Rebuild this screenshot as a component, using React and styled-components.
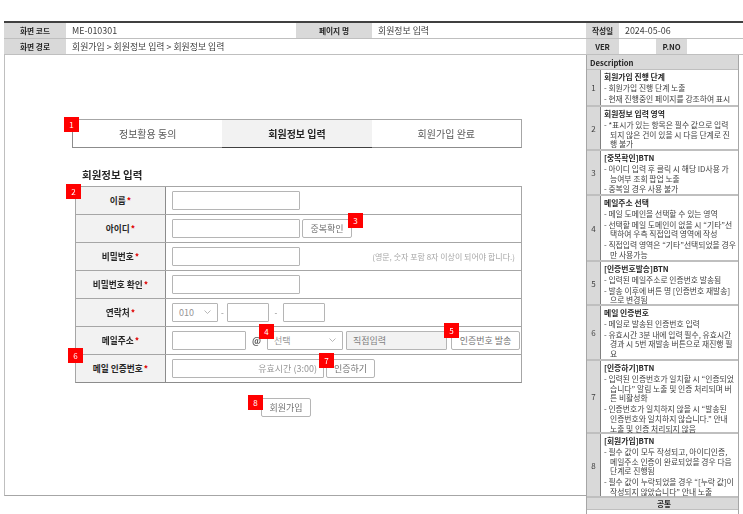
import React from 'react';
import styled, { createGlobalStyle } from 'styled-components';

const GlobalStyle = createGlobalStyle`
  html, body {
    margin: 0;
    padding: 0;
    background: #fff;
  }
  body {
    font-family: "Noto Sans CJK KR", "Noto Sans", sans-serif;
    color: #333;
  }
  * {
    box-sizing: border-box;
  }
`;

const Page = styled.div`
  width: 743px;
  height: 514px;
  padding: 21px 0 0 4px;
  overflow: hidden;
  filter: blur(0.25px);
`;

const Header = styled.div`
  display: grid;
  grid-template-columns: 62px 230px 76px 214px 33px 37px 31px 1fr;
  grid-template-rows: 16px 16px;
  border-top: 2px solid #404040;
`;

const HeadCell = styled.div`
  grid-column: span ${(p) => p.$span || 1};
  display: flex;
  align-items: center;
  justify-content: ${(p) => (p.$gray ? 'center' : 'flex-start')};
  padding-left: ${(p) => (p.$gray ? 0 : '6px')};
  background: ${(p) => (p.$gray ? '#d9d9d9' : '#fff')};
  border-bottom: 1px solid #bfbfbf;
  font-size: ${(p) => (p.$gray ? '7.7px' : '8.9px')};
  font-weight: ${(p) => (p.$gray ? 700 : 400)};
  color: ${(p) => (p.$gray ? '#262626' : '#404040')};
  white-space: nowrap;
`;

const Body = styled.div`
  display: flex;
  align-items: flex-start;
`;

const Main = styled.div`
  width: 582px;
  height: 441px;
  padding: 64px 0 0 67px;
  border-left: 1px solid #bfbfbf;
  border-bottom: 1px solid #a6a6a6;
`;

const Steps = styled.div`
  position: relative;
  display: flex;
  width: 450px;
  height: 29px;
  border: 1px solid #a6a6a6;
  border-left: 1px solid #8c8c8c;
  border-bottom: 1px solid #8c8c8c;
`;

const Step = styled.div`
  flex: 1;
  display: flex;
  align-items: center;
  justify-content: center;
  margin-bottom: ${(p) => (p.$active ? '-1px' : 0)};
  background: ${(p) => (p.$active ? '#f2f2f2' : '#fff')};
  border-bottom: ${(p) => (p.$active ? '1px solid #404040' : 'none')};
  font-size: 10px;
  font-weight: ${(p) => (p.$active ? 700 : 400)};
  color: ${(p) => (p.$active ? '#262626' : '#595959')};
`;

const Badge = styled.span`
  position: absolute;
  top: ${(p) => p.$top}px;
  left: ${(p) => p.$left}px;
  z-index: 2;
  display: flex;
  align-items: center;
  justify-content: center;
  width: 15px;
  height: 15px;
  background: #ff0000;
  color: #fff;
  font-size: 8px;
  font-weight: 400;
`;

const Title = styled.h2`
  margin: 20px 0 0 10px;
  font-size: 10.5px;
  line-height: 14px;
  font-weight: 700;
  color: #262626;
`;

const FormTable = styled.div`
  position: relative;
  width: 447px;
  margin: 4px 0 0 3px;
  border: 1px solid #a6a6a6;
  border-bottom: 1px solid #8c8c8c;
`;

const Row = styled.div`
  position: relative;
  display: flex;
  height: ${(p) => p.$h || 28}px;
  border-bottom: ${(p) => (p.$last ? 'none' : '1px solid #a6a6a6')};
`;

const Label = styled.div`
  flex: 0 0 90px;
  display: flex;
  align-items: center;
  justify-content: center;
  background: #f2f2f2;
  border-right: 1px solid #8c8c8c;
  font-size: 8.7px;
  font-weight: 700;
  color: #262626;
  white-space: nowrap;

  &::after {
    content: '*';
    color: #e00000;
    margin-left: 1px;
  }
`;

const Field = styled.div`
  flex: 1;
  display: flex;
  align-items: center;
  gap: ${(p) => p.$gap ?? 2}px;
  padding: 0 0 1px 6px;
`;

const Box = styled.div`
  position: relative;
  flex: 0 0 auto;
  display: flex;
  align-items: center;
  justify-content: ${(p) => (p.$right ? 'flex-end' : 'space-between')};
  width: ${(p) => p.$w}px;
  height: 19px;
  margin-left: ${(p) => p.$ml || 0}px;
  padding: 0 6px;
  background: ${(p) => (p.$fill ? '#f2f2f2' : '#fff')};
  border: 1px solid #b5b5b5;
  border-radius: 1px;
  font-size: 9px;
  color: ${(p) => (p.$fill ? '#7f7f7f' : '#969696')};
  white-space: nowrap;
`;

const Button = styled.div`
  position: relative;
  flex: 0 0 auto;
  display: flex;
  align-items: center;
  justify-content: center;
  width: ${(p) => p.$w}px;
  height: 19px;
  margin-left: ${(p) => p.$ml || 0}px;
  background: #fff;
  border: 1px solid #b5b5b5;
  border-radius: 2px;
  font-size: 9px;
  color: #737373;
  white-space: nowrap;
`;

const Hint = styled.span`
  margin-left: auto;
  padding-right: 6px;
  font-size: 8px;
  color: #a6a6a6;
  white-space: nowrap;
`;

const Sep = styled.span`
  flex: 0 0 ${(p) => p.$w}px;
  text-align: center;
  font-size: ${(p) => (p.$bold ? '9px' : '8px')};
  font-weight: ${(p) => (p.$bold ? 700 : 400)};
  color: ${(p) => (p.$bold ? '#595959' : '#7f7f7f')};
`;

const SubmitRow = styled.div`
  display: flex;
  justify-content: flex-start;
  margin: 15px 0 0 189px;
`;

const Sidebar = styled.aside`
  width: 153px;
  height: 459px;
  border-right: 1px solid #a6a6a6;
  border-left: 1px solid #a6a6a6;
`;

const SideHead = styled.div`
  display: flex;
  align-items: center;
  justify-content: ${(p) => (p.$center ? 'center' : 'flex-start')};
  height: ${(p) => p.$h}px;
  padding-left: 3px;
  background: #d9d9d9;
  border-bottom: 1px solid #bfbfbf;
  font-size: 7.7px;
  font-weight: ${(p) => (p.$center ? 700 : 600)};
  color: #262626;
`;

const DescRow = styled.div`
  display: flex;
  height: ${(p) => p.$h}px;
  border-bottom: 2px solid #bfbfbf;
`;

const DescNum = styled.div`
  flex: 0 0 14px;
  display: flex;
  align-items: center;
  justify-content: center;
  background: #d9d9d9;
  border-right: 1px solid #7f7f7f;
  font-size: 8px;
  color: #404040;
`;

const DescText = styled.div`
  flex: 1;
  padding: 2px 0 0 3px;
  font-size: 7.8px;
  line-height: 9.7px;
  color: #404040;
  white-space: nowrap;
`;

const DescTitle = styled.div`
  font-weight: 700;
  color: #262626;
`;

const DescLine = styled.div`
  margin-top: ${(p) => (p.$indent ? 0 : '1.2px')};
  padding-left: ${(p) => (p.$indent ? '6px' : 0)};
`;

const descriptions = [
  { n: 1, h: 37, title: '회원가입 진행 단계', lines: ['- 회원가입 진행 단계 노출', '- 현재 진행중인 페이지를 강조하여 표시'] },
  { n: 2, h: 44, title: '회원정보 입력 영역', lines: ['- *표시가 있는 항목은 필수 값으로 입력', '>되지 않은 건이 있을 시 다음 단계로 진', '>행 불가'] },
  { n: 3, h: 45, title: '[중복확인]BTN', lines: ['- 아이디 입력 후 클릭 시 해당 ID사용 가', '>능여부 조회 팝업 노출', '- 중복일 경우 사용 불가'] },
  { n: 4, h: 66, title: '메일주소 선택', lines: ['- 메일 도메인을 선택할 수 있는 영역', '- 선택할 메일 도메인이 없을 시 “기타”선', '>택하여 우측 직접입력 영역에 작성', '- 직접입력 영역은 “기타”선택되었을 경우', '>만 사용가능'] },
  { n: 5, h: 44, title: '[인증번호발송]BTN', lines: ['- 입력된 메일주소로 인증번호 발송됨', '- 발송 이후에 버튼 명 [인증번호 재발송]', '>으로 변경됨'] },
  { n: 6, h: 55, title: '메일 인증번호', lines: ['- 메일로 발송된 인증번호 입력', '- 유효시간 3분 내에 입력 필수, 유효시간', '>경과 시 5번 재발송 버튼으로 재진행 필', '>요'] },
  { n: 7, h: 73, title: '[인증하기]BTN', lines: ['- 입력된 인증번호가 일치할 시 “인증되었', '>습니다” 알림 노출 및 인증 처리되며 버', '>튼 비활성화', '- 인증번호가 일치하지 않을 시 “발송된', '>인증번호와 일치하지 않습니다.” 안내', '>노출 및 인증 처리되지 않음'] },
  { n: 8, h: 64, title: '[회원가입]BTN', lines: ['- 필수 값이 모두 작성되고, 아이디인증,', '>메일주소 인증이 완료되었을 경우 다음', '>단계로 진행됨', '- 필수 값이 누락되었을 경우 “[누락 값]이', '>작성되지 않았습니다” 안내 노출'] },
];

function Chevron() {
  return (
    <svg width="7" height="4" viewBox="0 0 7 4" fill="none" stroke="#a6a6a6" strokeWidth="0.8">
      <path d="M0.5 0.5 L3.5 3.5 L6.5 0.5" />
    </svg>
  );
}

export default function App() {
  return (
    <Page>
      <GlobalStyle />
      <Header>
        <HeadCell $gray>화면 코드</HeadCell>
        <HeadCell>ME-010301</HeadCell>
        <HeadCell $gray>페이지 명</HeadCell>
        <HeadCell>회원정보 입력</HeadCell>
        <HeadCell $gray>작성일</HeadCell>
        <HeadCell $span={3}>2024-05-06</HeadCell>
        <HeadCell $gray>화면 경로</HeadCell>
        <HeadCell $span={3}>회원가입 &gt; 회원정보 입력 &gt; 회원정보 입력</HeadCell>
        <HeadCell $gray>VER</HeadCell>
        <HeadCell />
        <HeadCell $gray>P.NO</HeadCell>
        <HeadCell />
      </Header>
      <Body>
        <Main>
          <Steps>
            <Badge $top={-3} $left={-9}>1</Badge>
            <Step>정보활용 동의</Step>
            <Step $active>회원정보 입력</Step>
            <Step>회원가입 완료</Step>
          </Steps>
          <Title>회원정보 입력</Title>
          <FormTable>
            <Badge $top={-3} $left={-10}>2</Badge>
            <Badge $top={161} $left={-8}>6</Badge>
            <Row>
              <Label>이름</Label>
              <Field><Box $w={128} /></Field>
            </Row>
            <Row>
              <Label>아이디</Label>
              <Field>
                <Box $w={128} />
                <Button $w={50}>
                  중복확인
                  <Badge $top={-7} $left={45}>3</Badge>
                </Button>
              </Field>
            </Row>
            <Row>
              <Label>비밀번호</Label>
              <Field>
                <Box $w={128} />
                <Hint>(영문, 숫자 포함 8자 이상이 되어야 합니다.)</Hint>
              </Field>
            </Row>
            <Row>
              <Label>비밀번호 확인</Label>
              <Field><Box $w={128} /></Field>
            </Row>
            <Row>
              <Label>연락처</Label>
              <Field $gap={0}>
                <Box $w={46}>010 <Chevron /></Box>
                <Sep $w={9}>-</Sep>
                <Box $w={42} />
                <Sep $w={14}>-</Sep>
                <Box $w={42} />
              </Field>
            </Row>
            <Row>
              <Label>메일주소</Label>
              <Field $gap={0}>
                <Box $w={74} />
                <Sep $w={21} $bold>@</Sep>
                <Box $w={76}>
                  선택 <Chevron />
                  <Badge $top={-8} $left={-9}>4</Badge>
                </Box>
                <Box $w={101} $fill $ml={3}>직접입력</Box>
                <Button $w={69} $ml={4}>
                  인증번호 발송
                  <Badge $top={-9} $left={-8}>5</Badge>
                </Button>
              </Field>
            </Row>
            <Row $last $h={27}>
              <Label>메일 인증번호</Label>
              <Field>
                <Box $w={152} $right>유효시간 (3:00)</Box>
                <Button $w={49}>
                  인증하기
                  <Badge $top={-7} $left={-8}>7</Badge>
                </Button>
              </Field>
            </Row>
          </FormTable>
          <SubmitRow>
            <Button $w={50}>
              회원가입
              <Badge $top={-4} $left={-14}>8</Badge>
            </Button>
          </SubmitRow>
        </Main>
        <Sidebar>
          <SideHead $h={15}>Description</SideHead>
          {descriptions.map((d) => (
            <DescRow key={d.n} $h={d.h}>
              <DescNum>{d.n}</DescNum>
              <DescText>
                <DescTitle>{d.title}</DescTitle>
                {d.lines.map((line) => (
                  <DescLine key={line} $indent={line[0] === '>'}>
                    {line.replace(/^>/, '')}
                  </DescLine>
                ))}
              </DescText>
            </DescRow>
          ))}
          <SideHead $h={12} $center>공통</SideHead>
        </Sidebar>
      </Body>
    </Page>
  );
}
